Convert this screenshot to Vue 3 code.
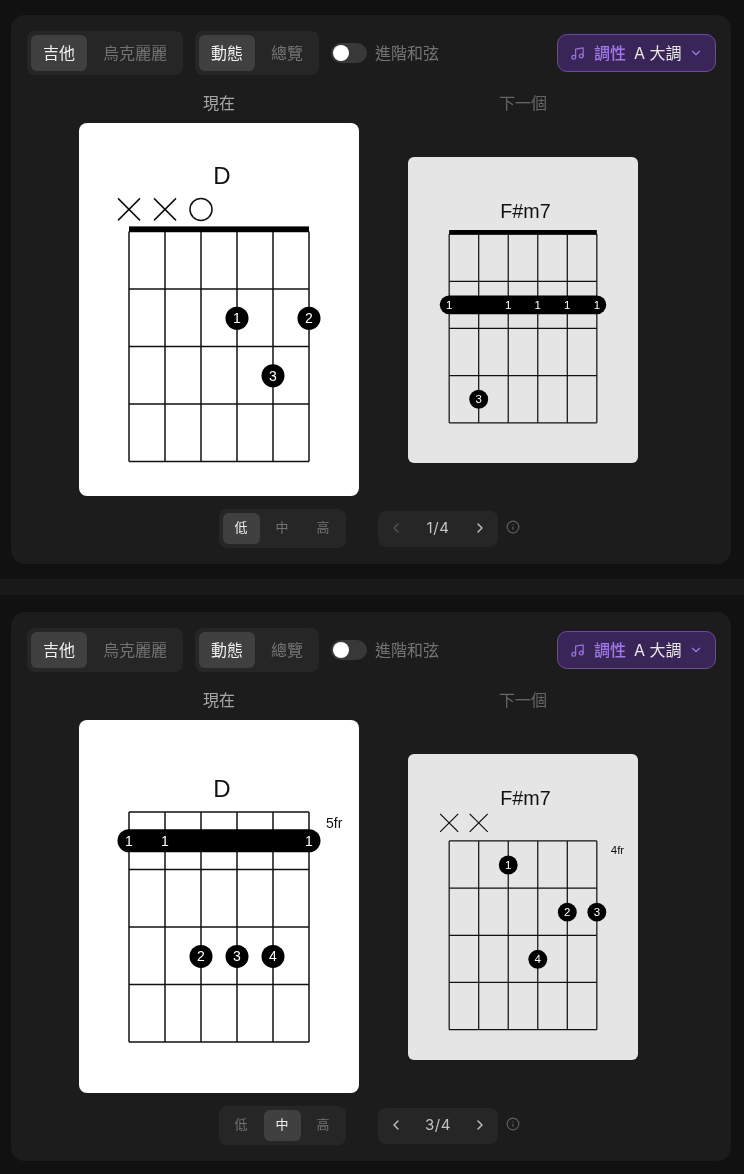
<script setup>
const W = [50, 86, 122, 158, 194, 230]

const panels = [
  {
    instrument: 0, mode: 0, level: 0, page: '1/4', prevDim: true,
    now: {
      name: 'D', titleY: 61, top: 108.4, dy: 0.6, nut: true, marks: [['x', 0], ['x', 1], ['o', 2]],
      dots: [[3, 2, '1'], [5, 2, '2'], [4, 3, '3']]
    },
    next: {
      name: 'F#m7', titleY: 74.2, top: 94, dy: 0, nut: true, marks: [],
      barre: { from: 0, to: 5, fret: 2, labels: [0, 2, 3, 4, 5] },
      dots: [[1, 4, '3']]
    }
  },
  {
    instrument: 0, mode: 0, level: 1, page: '3/4', prevDim: false,
    now: {
      name: 'D', titleY: 77, top: 92, dy: 0.7, fr: '5fr',
      marks: [],
      barre: { from: 0, to: 5, fret: 1, labels: [0, 1, 5] },
      dots: [[2, 3, '2'], [3, 3, '3'], [4, 3, '4']]
    },
    next: {
      name: 'F#m7', titleY: 62.2, top: 106, dy: 0.5, fr: '4fr', marks: [['x', 0], ['x', 1]],
      dots: [[2, 1, '1'], [4, 2, '2'], [5, 2, '3'], [3, 3, '4']]
    }
  }
]

const CELL = 57.5
const fretY = (c, n) => c.top + CELL * n
const barreY = (c, n) => c.top + CELL * (n - 0.5)
const cellY = (c, n) => barreY(c, n) + c.dy
</script>

<template>
  <div class="page">
    <template v-for="(p, i) in panels" :key="i">
      <div v-if="i === 1" class="divider"></div>
      <section class="card">
        <div class="toolbar">
          <div class="seg">
            <button class="seg-item" :class="{ on: p.instrument === 0 }">吉他</button>
            <button class="seg-item">烏克麗麗</button>
          </div>
          <div class="seg">
            <button class="seg-item" :class="{ on: p.mode === 0 }">動態</button>
            <button class="seg-item">總覽</button>
          </div>
          <div class="toggle-wrap">
            <span class="toggle"><span class="knob"></span></span>
            <span class="toggle-label">進階和弦</span>
          </div>
          <button class="key">
            <svg class="note" viewBox="0 0 24 24" fill="none" stroke="currentColor" stroke-width="2" stroke-linecap="round" stroke-linejoin="round">
              <path d="M9 18V5l12-2v13" />
              <circle cx="6" cy="18" r="3" />
              <circle cx="18" cy="16" r="3" />
            </svg>
            <span class="key-label">調性</span>
            <span class="key-value">A 大調</span>
            <svg class="caret" viewBox="0 0 24 24" fill="none" stroke="currentColor" stroke-width="2" stroke-linecap="round" stroke-linejoin="round">
              <path d="m6 9 6 6 6-6" />
            </svg>
          </button>
        </div>

        <div class="stage">
          <div class="head now-head">現在</div>
          <div class="head next-head">下一個</div>
          <template v-for="(c, k) in [p.now, p.next]" :key="k">
            <svg class="chord" :class="k === 0 ? 'big' : 'small'" viewBox="0 0 280 373">
              <text class="title" x="143" :y="c.titleY">{{ c.name }}</text>
              <template v-for="(m, j) in c.marks" :key="j">
                <g v-if="m[0] === 'x'" class="mark">
                  <path :d="`M${W[m[1]] - 11} ${c.top - 33}l22 22m0 -22l-22 22`" />
                </g>
                <circle v-else class="mark" :cx="W[m[1]]" :cy="c.top - 22" r="11" />
              </template>
              <line v-for="n in 5" :key="'f' + n" class="fret" :x1="W[0]" :x2="W[5]" :y1="fretY(c, n - 1)" :y2="fretY(c, n - 1)" />
              <line v-for="(x, n) in W" :key="'s' + n" class="string" :x1="x" :x2="x" :y1="c.top" :y2="fretY(c, 4)" />
              <rect v-if="c.nut" x="50" :y="c.top - 5" width="180" height="5.4" class="ink" />
              <text v-if="c.fr" class="fr" x="247" :y="c.top + 16">{{ c.fr }}</text>
              <g v-if="c.barre">
                <rect class="ink" :x="W[c.barre.from] - 11.5" :y="barreY(c, c.barre.fret) - 11.5" :width="W[c.barre.to] - W[c.barre.from] + 23" height="23" rx="11.5" />
                <text v-for="s in c.barre.labels" :key="'b' + s" class="num" :x="W[s]" :y="barreY(c, c.barre.fret) + 5.5">1</text>
              </g>
              <g v-for="(d, j) in c.dots" :key="'d' + j">
                <circle class="ink" :cx="W[d[0]]" :cy="cellY(c, d[1])" r="11.5" />
                <text class="num" :x="W[d[0]]" :y="cellY(c, d[1]) + 5">{{ d[2] }}</text>
              </g>
            </svg>
          </template>
        </div>

        <div class="footer">
          <div class="seg small-seg">
            <button v-for="(t, n) in ['低', '中', '高']" :key="t" class="seg-item" :class="{ on: p.level === n }">{{ t }}</button>
          </div>
          <div class="pager">
            <svg class="arrow" :class="{ dim: p.prevDim }" viewBox="0 0 24 24" fill="none" stroke="currentColor" stroke-width="2" stroke-linecap="round" stroke-linejoin="round">
              <path d="m15 18-6-6 6-6" />
            </svg>
            <span class="count">{{ p.page }}</span>
            <svg class="arrow" viewBox="0 0 24 24" fill="none" stroke="currentColor" stroke-width="2" stroke-linecap="round" stroke-linejoin="round">
              <path d="m9 18 6-6-6-6" />
            </svg>
          </div>
          <svg class="info" viewBox="0 0 24 24" fill="none" stroke="currentColor" stroke-width="2" stroke-linecap="round" stroke-linejoin="round">
            <circle cx="12" cy="12" r="10" />
            <path d="M12 16v-4" />
            <path d="M12 8h.01" />
          </svg>
        </div>
      </section>
    </template>
  </div>
</template>

<style>
html, body { background: #111111; }
</style>

<style scoped>
.page {
  width: 744px;
  height: 1174px;
  padding: 15px 13px 13px 11px;
  box-sizing: border-box;
  background: #111111;
  font-family: Inter, "Noto Sans CJK TC", sans-serif;
  overflow: hidden;
  will-change: transform;
}
.divider {
  height: 16px;
  margin: 15px -13px 17px -11px;
  background: #191919;
}
.card {
  height: 549px;
  box-sizing: border-box;
  padding: 16px;
  background: #1c1c1c;
  border-radius: 14px;
}
.toolbar {
  display: flex;
  align-items: center;
  gap: 12px;
  height: 44px;
}
.seg {
  display: flex;
  gap: 4px;
  padding: 4px;
  background: #262626;
  border-radius: 8px;
}
.seg-item {
  height: 36px;
  padding: 0 12px;
  border: 0;
  border-radius: 6px;
  background: transparent;
  color: #737373;
  font: inherit;
  font-size: 16px;
  line-height: 36px;
}
.seg-item.on {
  background: #404040;
  color: #f0f0f0;
}
.toggle-wrap {
  display: flex;
  align-items: center;
  gap: 8px;
}
.toggle {
  display: flex;
  align-items: center;
  width: 36px;
  height: 20px;
  padding: 2px;
  box-sizing: border-box;
  border-radius: 10px;
  background: #383838;
}
.knob {
  width: 16px;
  height: 16px;
  border-radius: 50%;
  background: #ffffff;
}
.toggle-label {
  padding-bottom: 2px;
  font-size: 16px;
  color: #737373;
}
.key {
  display: flex;
  align-items: center;
  width: 159px;
  height: 38px;
  margin-left: auto;
  margin-right: -1px;
  padding: 0 12px 2px 12px;
  box-sizing: border-box;
  border: 1px solid #6d4aa0;
  border-radius: 10px;
  background: #3a2558;
  font: inherit;
  font-size: 16px;
}
.note {
  width: 15px;
  height: 15px;
  margin-top: 2px;
  color: #9a6fe0;
}
.key-label {
  margin-left: 9px;
  color: #a078ea;
  font-weight: 500;
}
.key-value {
  margin-left: 8px;
  color: #e8e8e8;
}
.caret {
  width: 14px;
  height: 14px;
  margin-left: auto;
  margin-top: 2px;
  color: #a078ea;
}
.stage {
  display: grid;
  grid-template-columns: 280px 230px;
  column-gap: 49px;
  align-items: center;
  justify-items: center;
  margin: 16px 0 0 52px;
}
.head {
  height: 24px;
  margin-bottom: 8px;
  font-size: 16px;
  line-height: 24px;
}
.now-head { color: #a6a6a6; }
.next-head { color: #666666; }
.chord { display: block; }
.chord.big {
  width: 280px;
  height: 373px;
  background: #ffffff;
  border-radius: 8px;
}
.chord.small {
  width: 230px;
  height: 306px;
  background: #e5e5e5;
  border-radius: 6px;
}
.title {
  font-family: "Liberation Sans", Arial, sans-serif;
  font-size: 24px;
  text-anchor: middle;
  fill: #111111;
}
.fr {
  font-family: "Liberation Sans", Arial, sans-serif;
  font-size: 14px;
  fill: #111111;
}
.num {
  font-family: "Liberation Sans", Arial, sans-serif;
  font-size: 14px;
  text-anchor: middle;
  fill: #ffffff;
}
.ink { fill: #000000; }
.fret, .string {
  stroke: #111111;
  stroke-width: 1.5;
}
.mark {
  fill: none;
  stroke: #111111;
  stroke-width: 1.5;
}
.footer {
  display: flex;
  align-items: center;
  margin: 13px 0 0 192px;
}
.small-seg {
  padding: 4px;
}
.small-seg .seg-item {
  height: 31px;
  padding: 0 12.5px 2px 11.5px;
  font-size: 13px;
  line-height: 29px;
}
.pager {
  display: flex;
  align-items: center;
  justify-content: space-between;
  width: 120px;
  height: 36px;
  margin-left: 32px;
  padding: 0 10px;
  box-sizing: border-box;
  border-radius: 8px;
  background: #262626;
}
.arrow {
  width: 16px;
  height: 16px;
  margin-bottom: 1px;
  color: #c4c4c4;
}
.arrow.dim { color: #555555; }
.count {
  padding-bottom: 2px;
  font-size: 15px;
  letter-spacing: 0.6px;
  color: #c4c4c4;
}
.info {
  width: 14px;
  height: 14px;
  margin-left: 8px;
  margin-bottom: 3px;
  color: #5f5f5f;
}
</style>
